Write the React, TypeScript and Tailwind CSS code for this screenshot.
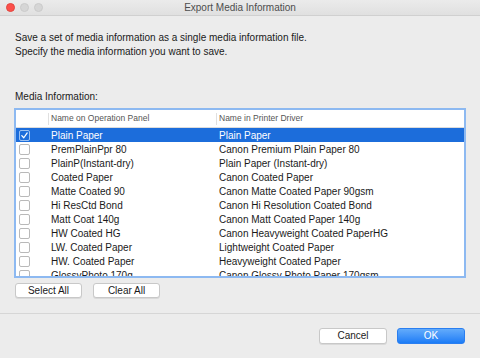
import React from "react";

const rows: [string, string][] = [
  ["Plain Paper", "Plain Paper"],
  ["PremPlainPpr 80", "Canon Premium Plain Paper 80"],
  ["PlainP(Instant-dry)", "Plain Paper (Instant-dry)"],
  ["Coated Paper", "Canon Coated Paper"],
  ["Matte Coated 90", "Canon Matte Coated Paper 90gsm"],
  ["Hi ResCtd Bond", "Canon Hi Resolution Coated Bond"],
  ["Matt Coat 140g", "Canon Matt Coated Paper 140g"],
  ["HW Coated HG", "Canon Heavyweight Coated PaperHG"],
  ["LW. Coated Paper", "Lightweight Coated Paper"],
  ["HW. Coated Paper", "Heavyweight Coated Paper"],
  ["GlossyPhoto 170g", "Canon Glossy Photo Paper 170gsm"],
];

function Check({ on }: { on: boolean }) {
  if (on) {
    return (
      <div className="w-[11px] h-[11px] rounded-[2px] border border-[#9cc2f2] flex items-center justify-center">
        <svg width="9" height="9" viewBox="0 0 10 10">
          <path d="M2 5.2 L4.2 7.5 L8 2.2" fill="none" stroke="white" strokeWidth="1.4" strokeLinecap="round" strokeLinejoin="round" />
        </svg>
      </div>
    );
  }
  return <div className="w-[11px] h-[11px] rounded-[2px] border border-[#b9b9b9] bg-white" />;
}

export default function App() {
  return (
    <div
      className="w-[480px] h-[358px] bg-[#ececec] flex flex-col overflow-hidden text-[#1a1a1a]"
      style={{ fontFamily: '"Liberation Sans", Arial, sans-serif' }}
    >
      {/* Title bar */}
      <div className="h-[16px] border-b border-[#d0d0d0] bg-gradient-to-b from-[#ebebeb] to-[#e0e0e0] flex items-center relative">
        <div className="flex gap-[5px] pl-[6px]">
          <div className="w-[9px] h-[9px] rounded-full bg-[#fc4f4a] border border-[#e2463f]" />
          <div className="w-[9px] h-[9px] rounded-full bg-[#d6d6d6] border border-[#cbcbcb]" />
          <div className="w-[9px] h-[9px] rounded-full bg-[#d6d6d6] border border-[#cbcbcb]" />
        </div>
        <div className="absolute inset-0 flex items-center justify-center text-[10px] text-[#4d4d4d]">
          Export Media Information
        </div>
      </div>

      {/* Body */}
      <div className="px-[15px] pt-[15px] text-[10px] leading-[14px]">
        <p>Save a set of media information as a single media information file.</p>
        <p>Specify the media information you want to save.</p>
      </div>

      <div className="px-[15px] mt-[31px] text-[10px] leading-[14px]">Media Information:</div>

      <div className="ml-[14px] mt-[4px] w-[452px] h-[170px] border-2 border-[#8db9f1] bg-white overflow-hidden">
        <div className="h-[18px] flex items-center text-[8.5px] text-[#555] border-b border-[#dcdcdc]">
          <div className="w-[32px] h-full" />
          <div className="w-[168px] h-[12px] border-l border-[#e0e0e0] pl-[2px] flex items-center">Name on Operation Panel</div>
          <div className="flex-1 h-[12px] border-l border-[#e0e0e0] pl-[2px] flex items-center">Name in Printer Driver</div>
        </div>
        {rows.map(([a, b], i) => (
          <div
            key={i}
            className={`h-[14px] flex items-center text-[10px] ${i === 0 ? "bg-[#1c6ddb] text-white" : ""}`}
          >
            <div className="w-[32px] pl-[3px] flex items-center">
              <Check on={i === 0} />
            </div>
            <div className="w-[168px] pl-[3px] whitespace-nowrap">{a}</div>
            <div className="flex-1 pl-[3px] whitespace-nowrap">{b}</div>
          </div>
        ))}
      </div>

      <div className="flex gap-[11px] ml-[15px] mt-[5px]">
        <button className="w-[67px] h-[15px] bg-white rounded-[3px] border border-[#c8c8c8] shadow-[0_1px_0_rgba(0,0,0,0.08)] text-[10px] leading-none">
          Select All
        </button>
        <button className="w-[67px] h-[15px] bg-white rounded-[3px] border border-[#c8c8c8] shadow-[0_1px_0_rgba(0,0,0,0.08)] text-[10px] leading-none">
          Clear All
        </button>
      </div>

      <div className="mt-[15px] border-t border-[#d6d6d6]" />

      <div className="flex justify-end gap-[10px] pr-[15px] mt-[14px]">
        <button className="w-[68px] h-[16px] bg-white rounded-[3px] border border-[#c8c8c8] shadow-[0_1px_0_rgba(0,0,0,0.08)] text-[10px] leading-none">
          Cancel
        </button>
        <button className="w-[68px] h-[16px] rounded-[3px] bg-gradient-to-b from-[#62abfb] to-[#1a7cf6] border border-[#2a7ef0] text-white text-[10px] leading-none">
          OK
        </button>
      </div>
    </div>
  );
}
